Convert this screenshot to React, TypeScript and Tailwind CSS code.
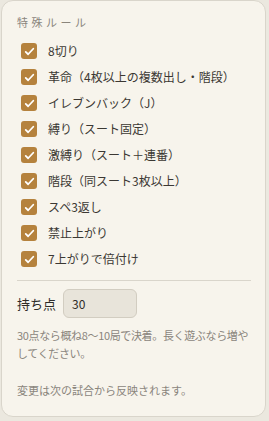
import { useState } from "react";

const rules = [
  "8切り",
  "革命（4枚以上の複数出し・階段）",
  "イレブンバック（J）",
  "縛り（スート固定）",
  "激縛り（スート＋連番）",
  "階段（同スート3枚以上）",
  "スペ3返し",
  "禁止上がり",
  "7上がりで倍付け",
];

function CheckIcon() {
  return (
    <svg viewBox="0 0 16 16" className="w-[11px] h-[11px]" fill="none">
      <path d="M2.5 8.5l3.5 3.5 7.5-8" stroke="white" strokeWidth="2.6" strokeLinecap="round" strokeLinejoin="round" />
    </svg>
  );
}

export default function App() {
  const [checked, setChecked] = useState<boolean[]>(rules.map(() => true));
  const [points, setPoints] = useState("30");

  return (
    <div className="min-h-screen bg-[#ebe8df] pl-[1px] pr-[3px] pb-[4px]" style={{ fontFamily: '"Noto Sans CJK JP", "Noto Sans", sans-serif' }}>
      <div className="h-[417px] rounded-[12px] border border-[#d9d5cb] bg-[#f7f4ec] pl-[15px] pr-[10px] pt-[13px]">
        <div className="text-[11px] leading-[16px] tracking-[0.32em] text-[#8a857c]">特殊ルール</div>

        <div className="mt-[13px] flex flex-col gap-[10px] pl-[4px]">
          {rules.map((rule, i) => (
            <label key={rule} className="flex items-center gap-[11px] cursor-pointer">
              <button
                type="button"
                onClick={() => setChecked(checked.map((c, j) => (j === i ? !c : c)))}
                className={
                  checked[i]
                    ? "w-[16px] h-[16px] rounded-[3px] bg-[#b5823d] flex items-center justify-center shrink-0"
                    : "w-[16px] h-[16px] rounded-[3px] border border-[#b5823d] bg-white shrink-0"
                }
              >
                {checked[i] && <CheckIcon />}
              </button>
              <span className="text-[12px] leading-[16px] text-[#3b3833]">{rule}</span>
            </label>
          ))}
        </div>

        <div className="mt-[13px] mr-[4px] border-t border-[#d9d5cb]" />

        <div className="mt-[8px] flex items-center gap-[7px]">
          <span className="text-[13px] text-[#2f2c28]">持ち点</span>
          <input
            value={points}
            onChange={(e) => setPoints(e.target.value)}
            className="w-[74px] h-[29px] rounded-[6px] border border-[#d2cdc1] bg-[#e8e4da] px-[8px] text-[12px] text-[#2f2c28] outline-none"
          />
        </div>

        <p className="mt-[8px] text-[11px] leading-[18px] tracking-[-0.35px] text-[#8a857c]">
          30点なら概ね8〜10局で決着。長く遊ぶなら増やしてください。
        </p>

        <p className="mt-[19px] text-[11px] leading-[18px] text-[#8a857c]">変更は次の試合から反映されます。</p>
      </div>
    </div>
  );
}
